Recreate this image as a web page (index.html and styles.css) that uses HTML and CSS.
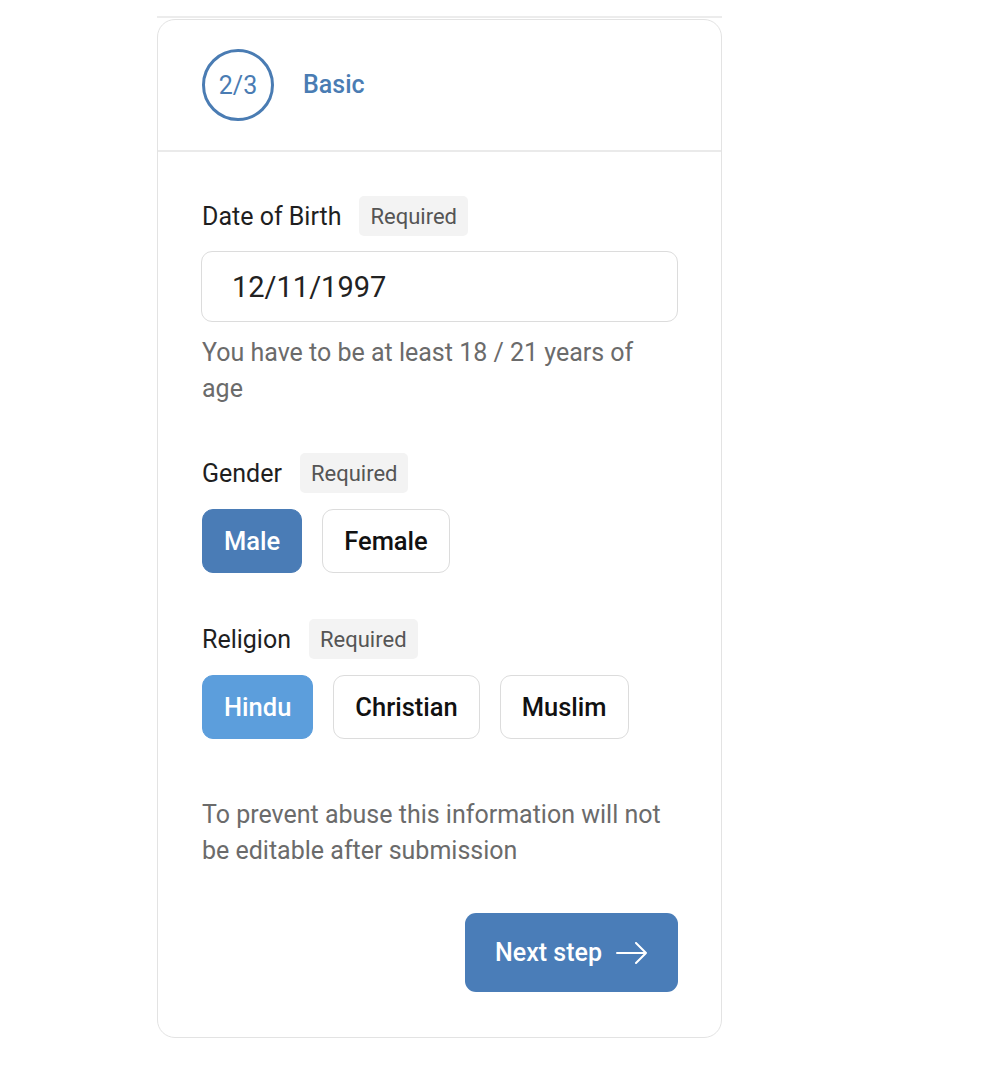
FILE: index.html
```html
<!DOCTYPE html>
<html lang="en">
<head>
<meta charset="utf-8">
<title>Basic</title>
<link rel="stylesheet" href="styles.css">
</head>
<body>
<div class="wrap">
  <div class="topline"></div>
  <div class="card">
    <div class="card-head">
      <div class="step">2/3</div>
      <div class="step-title">Basic</div>
    </div>
    <div class="card-body">
      <div class="label-row">
        <span class="label">Date of Birth</span>
        <span class="badge">Required</span>
      </div>
      <div class="input">12/11/1997</div>
      <p class="hint">You have to be at least 18 / 21 years of age</p>

      <div class="label-row gap-top">
        <span class="label">Gender</span>
        <span class="badge">Required</span>
      </div>
      <div class="options">
        <button class="opt opt-dark">Male</button>
        <button class="opt">Female</button>
      </div>

      <div class="label-row gap-top">
        <span class="label">Religion</span>
        <span class="badge">Required</span>
      </div>
      <div class="options">
        <button class="opt opt-light">Hindu</button>
        <button class="opt">Christian</button>
        <button class="opt">Muslim</button>
      </div>

      <p class="note">To prevent abuse this information will not be editable after submission</p>

      <div class="actions">
        <button class="next">Next step
          <svg width="32" height="22" viewBox="0 0 32 22" fill="none" stroke="#fff" stroke-width="2" stroke-linecap="round" stroke-linejoin="round"><path d="M1 11h29M20 1l10 10-10 10"/></svg>
        </button>
      </div>
    </div>
  </div>
</div>
</body>
</html>
```

FILE: styles.css
```css
* { box-sizing: border-box; }
body {
  margin: 0;
  background: #fff;
  font-family: Roboto, "Liberation Sans", Arial, sans-serif;
}
.wrap {
  margin-left: 157px;
  width: 565px;
  padding-top: 16px;
}
.topline {
  border-top: 2px solid #ececec;
}
.card {
  margin-top: 1px;
  border: 1px solid #e3e3e3;
  border-radius: 18px;
  background: #fff;
}
.card-head {
  height: 132px;
  display: flex;
  align-items: center;
  gap: 29px;
  padding-left: 44px;
  border-bottom: 2px solid #eaeaea;
}
.step {
  width: 72px;
  height: 72px;
  border: 3px solid #4a7cb3;
  border-radius: 50%;
  display: flex;
  align-items: center;
  justify-content: center;
  color: #4a7cb3;
  font-size: 25px;
}
.step-title {
  color: #4a7cb3;
  font-size: 25px;
  font-weight: 500;
  padding-bottom: 2px;
}
.card-body {
  padding: 44px 43px 45px 44px;
}
.label-row {
  display: flex;
  align-items: center;
  gap: 18px;
  height: 40px;
}
.gap-top { margin-top: 46px; }
.label {
  font-size: 25px;
  color: #1f1f1f;
}
.badge {
  height: 40px;
  display: flex;
  align-items: center;
  padding: 0 11px;
  background: #f3f3f3;
  border-radius: 5px;
  color: #555;
  font-size: 22px;
}
.input {
  margin-top: 15px;
  height: 71px;
  margin-left: -1px;
  border: 1.5px solid #dcdcdc;
  border-radius: 11px;
  display: flex;
  align-items: center;
  padding-left: 30px;
  font-size: 29px;
  color: #222;
}
.hint, .note {
  margin: 13px 0 0;
  font-size: 25px;
  line-height: 36px;
  color: #6b6b6b;
}
.hint { padding-right: 20px; }
.note { margin-top: 58px; }
.options {
  display: flex;
  gap: 20px;
  margin-top: 16px;
}
.opt {
  height: 64px;
  padding: 0 21px;
  border: 1.5px solid #dcdcdc;
  border-radius: 11px;
  background: #fff;
  font-family: inherit;
  font-size: 25.5px;
  font-weight: 500;
  color: #111;
}
.opt-dark {
  background: #4a7cb6;
  border-color: #4a7cb6;
  color: #fff;
}
.opt-light {
  background: #5c9edc;
  border-color: #5c9edc;
  color: #fff;
}
.actions {
  display: flex;
  justify-content: flex-end;
  margin-top: 44px;
}
.next {
  width: 213px;
  height: 79px;
  border: none;
  border-radius: 11px;
  background: #4a7db8;
  color: #fff;
  font-family: inherit;
  font-size: 25px;
  font-weight: 500;
  display: flex;
  align-items: center;
  justify-content: center;
  gap: 14px;
}
```
